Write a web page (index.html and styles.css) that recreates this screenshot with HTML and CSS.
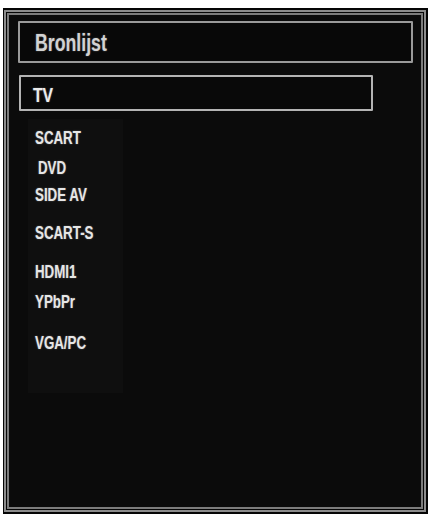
FILE: index.html
```html
<!DOCTYPE html>
<html lang="nl">
<head>
<meta charset="utf-8">
<title>Bronlijst</title>
<link rel="stylesheet" href="styles.css">
</head>
<body>
<div class="frame">
  <div class="frame-line">
    <div class="panel">
      <div class="title-box"><span class="title">Bronlijst</span></div>
      <div class="selected-box"><span class="selected">TV</span></div>
      <ul class="sources">
        <li class="src src-scart"><span class="label">SCART</span></li>
        <li class="src src-dvd"><span class="label">DVD</span></li>
        <li class="src src-side"><span class="label">SIDE AV</span></li>
        <li class="src src-scarts"><span class="label">SCART-S</span></li>
        <li class="src src-hdmi"><span class="label">HDMI1</span></li>
        <li class="src src-ypbpr"><span class="label">YPbPr</span></li>
        <li class="src src-vga"><span class="label">VGA/PC</span></li>
      </ul>
    </div>
  </div>
</div>
</body>
</html>
```

FILE: styles.css
```css
html, body {
  margin: 0;
  padding: 0;
  background: #ffffff;
}

body {
  font-family: "Liberation Sans", Arial, sans-serif;
  font-weight: bold;
}

.frame {
  box-sizing: border-box;
  margin: 8px 3px 0 3px;
  width: 425px;
  height: 506px;
  padding: 2px 2px 2px 1px;
  background: #050505;
}

.frame-line {
  box-sizing: border-box;
  height: 100%;
  border: 2px solid #8c8c8c;
  padding: 1px;
  background: #060606;
}

.panel {
  box-sizing: border-box;
  height: 100%;
  border: 2px solid #7c7c7c;
  background: #0b0b0b;
  padding: 6px 8px 0 9px;
}

.title-box {
  box-sizing: border-box;
  height: 42px;
  border: 2px solid #9a9a9a;
  border-radius: 1px;
  background: #080808;
  display: flex;
  align-items: center;
  padding-left: 15px;
}

.title {
  display: inline-block;
  font-size: 23px;
  line-height: 1;
  color: #d2d2d2;
  text-shadow: 0 0 2px rgba(220, 220, 220, 0.4);
  transform: scaleX(0.77);
  transform-origin: left center;
  margin-top: 2px;
}

.selected-box {
  box-sizing: border-box;
  margin-top: 12px;
  margin-left: 1px;
  width: 354px;
  height: 36px;
  border: 2px solid #b4b4b4;
  border-radius: 1px;
  background: #090909;
  display: flex;
  align-items: center;
  padding-left: 12px;
}

.selected {
  display: inline-block;
  font-size: 21px;
  line-height: 1;
  color: #ececec;
  text-shadow: 0 0 2px rgba(230, 230, 230, 0.4);
  transform: scaleX(0.75);
  transform-origin: left center;
  margin-top: 2px;
}

.sources {
  list-style: none;
  margin: 8px 0 0 10px;
  padding: 9px 0 40px 7px;
  width: 88px;
  background: #0f0f0f;
}

.src {
  font-size: 18px;
  line-height: 20px;
  height: 20px;
  color: #e6e6e6;
  white-space: nowrap;
}

.label {
  display: inline-block;
  text-shadow: 0 0 2px rgba(230, 230, 230, 0.4);
  transform: scaleX(0.74);
  transform-origin: left center;
}

.src-scart { margin-top: 0; }
.src-dvd { margin-top: 10px; padding-left: 3px; }
.src-side { margin-top: 7px; }
.src-scarts { margin-top: 18px; }
.src-hdmi { margin-top: 19px; }
.src-ypbpr { margin-top: 10px; }
.src-vga { margin-top: 21px; }
```
